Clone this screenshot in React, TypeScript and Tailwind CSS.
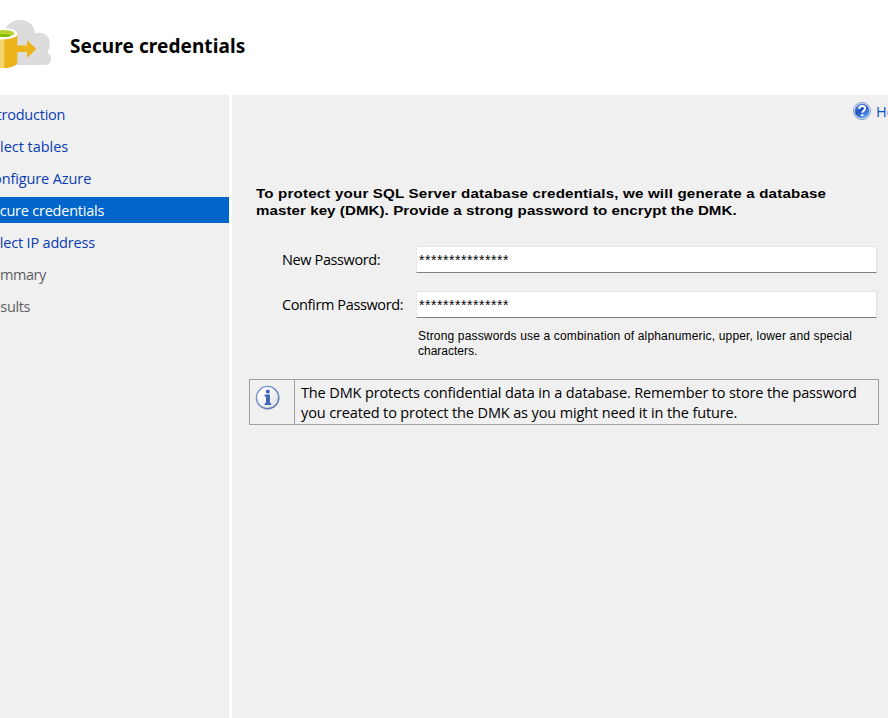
import React from "react";

type StepState = "link" | "active" | "pending";

const steps: { label: string; state: StepState; tracking: string }[] = [
  { label: "Introduction", state: "link", tracking: "tracking-[-0.22px]" },
  { label: "Select tables", state: "link", tracking: "tracking-[-0.03px]" },
  { label: "Configure Azure", state: "link", tracking: "tracking-[-0.11px]" },
  { label: "Secure credentials", state: "active", tracking: "tracking-[-0.22px]" },
  { label: "Select IP address", state: "link", tracking: "tracking-[-0.18px]" },
  { label: "Summary", state: "pending", tracking: "tracking-[-0.45px]" },
  { label: "Results", state: "pending", tracking: "tracking-[-0.36px]" },
];

const stateClass: Record<StepState, string> = {
  link: "text-[#0a3cb4]",
  active: "bg-[#0066cc] text-white",
  pending: "text-[#5f5f5f]",
};

function StretchLogo() {
  return (
    <svg width="52" height="52" viewBox="0 0 52 52" className="mt-[19px] block shrink-0">
      <path
        d="M5 10C8 4 14 1 20.5 1C28.5 1 34.6 6.5 35.2 14.6C37.3 13.8 39.5 13.5 41.8 14C46.8 15 50 19.5 49.8 25C49.8 28.5 48.6 31.5 47.3 34C49.8 35 51 37 51 39.7C51 43.2 48.5 46 45 46H8V12Z"
        fill="#dcdcdc"
      />
      <path d="M-16 14V43C-16 46.8-6 49 1 49H5C11.5 49 17.3 46.5 17.3 43V14Z" fill="#ecb31c" />
      <path d="M0 14H4.3V49H0Z" fill="#f4d46c" />
      <ellipse cx="3" cy="14.8" rx="14.4" ry="5.7" fill="#fff" />
      <ellipse cx="4" cy="14.4" rx="10.4" ry="3.5" fill="#b8d432" />
      <path d="M-4 16.2C-1 15 8 14.8 11.5 16.4C8 18.3 -1 18.4-4 17Z" fill="#7fba00" />
      <path d="M17 26.5H27V21L36.3 30L27 39V33H17Z" fill="#ecb31c" />
    </svg>
  );
}

function HelpIcon() {
  return (
    <svg width="20" height="20" viewBox="0 0 20 20" className="block shrink-0">
      <defs>
        <linearGradient id="helpFill" x1="0" y1="0" x2="0.6" y2="1">
          <stop offset="0" stopColor="#7ba3e6" />
          <stop offset="0.5" stopColor="#1c4fc0" />
          <stop offset="1" stopColor="#5a9cf2" />
        </linearGradient>
      </defs>
      <circle cx="10" cy="10" r="8.6" fill="#ccd7ea" stroke="#91a7cf" strokeWidth="1" />
      <circle cx="10" cy="10" r="7.2" fill="url(#helpFill)" />
      <path d="M7.2 8C7.2 5.9 8.5 5 10.2 5C12 5 13.1 6 13.1 7.5C13.1 9.6 10.3 9.6 10.3 11.8" fill="none" stroke="#fff" strokeWidth="2" />
      <rect x="9.2" y="13.2" width="2.2" height="2" fill="#fff" />
    </svg>
  );
}

function InfoIcon() {
  return (
    <svg width="26" height="26" viewBox="0 0 26 26" className="block">
      <defs>
        <linearGradient id="infoRing" x1="0" y1="0" x2="1" y2="1">
          <stop offset="0" stopColor="#7fa0d8" />
          <stop offset="1" stopColor="#526fa8" />
        </linearGradient>
        <linearGradient id="infoFill" x1="0" y1="0" x2="1" y2="1">
          <stop offset="0.3" stopColor="#ffffff" />
          <stop offset="1" stopColor="#d5d8df" />
        </linearGradient>
      </defs>
      <circle cx="12.6" cy="12.6" r="11.2" fill="url(#infoFill)" stroke="url(#infoRing)" strokeWidth="1.4" />
      <circle cx="12.8" cy="6.4" r="2" fill="#3f62b5" />
      <path d="M9.6 9.6H14.9V18.2H16.2V20H9.6V18.2H11V11.4H9.6Z" fill="#3f62b5" />
    </svg>
  );
}

function PasswordRow({ label, labelClass }: { label: string; labelClass: string }) {
  return (
    <div className="flex h-[27px] items-start">
      <label className="w-[134px] shrink-0 whitespace-nowrap text-[14.5px] leading-[27px]">
        <span className={labelClass}>{label}</span>
      </label>
      <div className="h-[27px] w-[461px] shrink-0 border border-b-[#808080] border-l-[#e8e8e8] border-r-[#e3e3e3] border-t-[#e5e5e5] bg-white pl-[2px] font-['Liberation_Sans',sans-serif] text-[14px] leading-[26px] tracking-[0.56px]">
        ***************
      </div>
    </div>
  );
}

export default function App() {
  return (
    <div className="flex h-[718px] w-[888px] flex-col overflow-hidden bg-white font-['Open_Sans','Noto_Sans',sans-serif] text-black">
      <header className="flex h-[95px] shrink-0">
        <StretchLogo />
        <h1 className="ml-[18px] mt-[33px] whitespace-nowrap font-['Noto_Sans',sans-serif] text-[19px] font-bold leading-[26px] tracking-[0.08px]">
          Secure credentials
        </h1>
      </header>
      <div className="flex min-h-0 flex-1">
        <nav className="flex w-[229px] shrink-0 flex-col gap-[6px] overflow-hidden bg-[#f0f0f0] pt-[6px]">
          {steps.map((step) => (
            <div key={step.label} className={`h-[26px] shrink-0 whitespace-nowrap text-[14.5px] leading-[27px] ${stateClass[step.state]}`}>
              <span className={`-ml-[16px] ${step.tracking}`}>{step.label}</span>
            </div>
          ))}
        </nav>
        <main className="ml-[3px] flex min-w-0 flex-1 flex-col overflow-hidden bg-[#f0f0f0]">
          <div className="ml-[620px] mt-[6px] flex h-[21px] shrink-0 gap-[4px] whitespace-nowrap text-[14.5px] leading-[21px] text-[#0a50c8]">
            <HelpIcon />
            <span>Help</span>
          </div>
          <p className="ml-[24px] mt-[63px] shrink-0 origin-left scale-x-[1.12] whitespace-nowrap font-['Liberation_Sans',sans-serif] text-[13.5px] font-bold leading-[17px]">
            <span className="tracking-[0.16px]">To protect your SQL Server database credentials, we will generate a database</span>
            <br />
            <span className="tracking-[0.05px]">master key (DMK). Provide a strong password to encrypt the DMK.</span>
          </p>
          <div className="ml-[50px] mt-[27px] flex shrink-0 flex-col gap-[18px]">
            <PasswordRow label="New Password:" labelClass="tracking-[-0.38px]" />
            <PasswordRow label="Confirm Password:" labelClass="tracking-[-0.38px]" />
          </div>
          <p className="ml-[186px] mt-[11px] shrink-0 whitespace-nowrap font-['Liberation_Sans',sans-serif] text-[12px] leading-[15px]">
            <span className="tracking-[0.165px]">Strong passwords use a combination of alphanumeric, upper, lower and special</span>
            <br />
            characters.
          </p>
          <section className="ml-[17px] mt-[20px] flex h-[46px] w-[630px] shrink-0 border border-[#a0a0a0]">
            <div className="w-[45px] shrink-0 border-r border-[#a0a0a0] pl-[5px] pt-[5px]">
              <InfoIcon />
            </div>
            <p className="ml-[6px] mt-[3px] whitespace-nowrap text-[14.5px] leading-[20px]">
              <span className="tracking-[-0.13px]">The DMK protects confidential data in a database. Remember to store the password</span>
              <br />
              <span className="tracking-[-0.13px]">you created to protect the DMK as you might need it in the future.</span>
            </p>
          </section>
        </main>
      </div>
    </div>
  );
}
